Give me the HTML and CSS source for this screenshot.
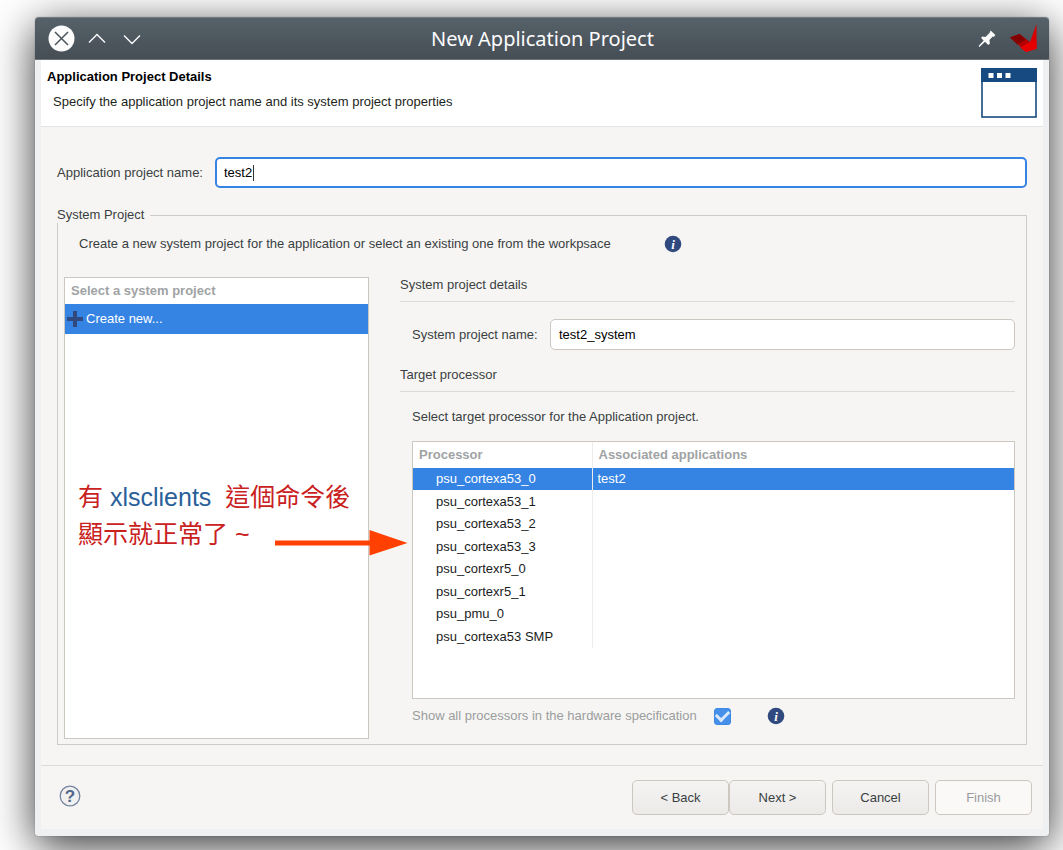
FILE: index.html
```html
<!DOCTYPE html>
<html lang="zh-Hant">
<head>
<meta charset="utf-8">
<title>New Application Project</title>
<link rel="stylesheet" href="styles.css">
</head>
<body>
<main class="window">
  <header class="titlebar">
    <div class="title-group">
      <button class="title-btn" aria-label="Close"><svg width="28" height="28" viewBox="0 0 28 28"><circle cx="13.500" cy="13.500" r="13" fill="#fcfcfc"/><path d="M7 7l13 13M20 7l-13 13" stroke="#4b545b" stroke-width="1.500" fill="none"/></svg></button>
      <button class="title-btn" aria-label="Maximize"><svg width="18" height="28" viewBox="0 0 18 28"><path d="M1 17.500l8-8 8 8" stroke="#fcfcfc" stroke-width="1.400" fill="none"/></svg></button>
      <button class="title-btn" aria-label="Minimize"><svg width="18" height="28" viewBox="0 0 18 28"><path d="M1 10.500l8 8 8-8" stroke="#fcfcfc" stroke-width="1.400" fill="none"/></svg></button>
    </div>
    <h1 class="title">New Application Project</h1>
    <div class="title-group title-end">
      <button class="title-btn" aria-label="Keep above"><svg width="18" height="18" viewBox="0 0 18 18"><path d="M12.600 .6l4.800 4.400-1.700 2-1-.4-3.300 3.300 .5 3.600-1.600 1.400-3.300-3.200-5.600 5.200-.8-.8 5-5.700-2.500-2.300 1.200-1.600 3.200.4 4-4z" fill="#fcfcfc"/></svg></button>
      <svg class="brand" width="28" height="29" viewBox="0 0 28 29"><path d="M1 13.500l9.500-3.500 10.500 8 -4 9.500z" fill="#b40000"/><path d="M1 13.500l9.500-3.500 6.500 5.500-8.500 5z" fill="#820000"/><path d="M27.500 0v25l-10.500 3-3-2.500 7-7.500z" fill="#d80000"/><path d="M21 18l6.500-1.500v8l-10.500 3.500-6-4.500z" fill="#e60000"/></svg>
    </div>
  </header>

  <section class="banner">
    <div>
      <h2 class="banner-title">Application Project Details</h2>
      <p class="banner-text">Specify the application project name and its system project properties</p>
    </div>
    <svg width="56" height="50" viewBox="0 0 56 50"><rect x="1" y="1" width="54" height="48" fill="#fff" stroke="#174a80" stroke-width="1.600"/><path d="M0 0h56v14H0z" fill="#174a80"/><path d="M7.500 5h5v5h-5zM16 5h5v5h-5zM24.500 5h5v5h-5z" fill="#fff"/></svg>
  </section>

  <form class="content">
    <div class="field">
      <label class="label" for="app-name">Application project name:</label>
      <span class="input-wrap"><input class="input focused" id="app-name" type="text" value="test2"><span class="caret"></span></span>
    </div>

    <fieldset class="group">
      <legend>System Project</legend>
      <div class="intro">
        <span class="intro-text">Create a new system project for the application or select an existing one from the workpsace</span>
        <svg width="18" height="18" viewBox="0 0 18 18"><circle cx="9" cy="9" r="8.300" fill="#304a80"/><text x="9" y="13.500" class="info-glyph">i</text></svg>
      </div>
      <div class="columns">
        <div class="panel systems">
          <table class="list">
            <thead><tr><th>Select a system project</th></tr></thead>
            <tbody><tr class="selected"><td><span class="create"><svg width="16" height="16" viewBox="0 0 16 16"><path d="M6 0h4v6h6v4h-6v6H6v-6H0V6h6z" fill="#304a80"/></svg>Create new...</span></td></tr></tbody>
          </table>
          <p class="note">有 <span class="command">xlsclients</span>&nbsp; 這個命令後<br>顯示就正常了 ~</p>
          <svg class="arrow" width="134" height="26" viewBox="0 0 134 26"><path d="M0 10.500h94.500V0l38 13-38 12.500v-10H0z" fill="#ff4000"/></svg>
        </div>
        <div class="details">
          <h3 class="heading">System project details</h3>
          <div class="field sub-field">
            <label class="sub-label" for="sys-name">System project name:</label>
            <span class="input-wrap"><input class="input" id="sys-name" type="text" value="test2_system"></span>
          </div>
          <h3 class="heading">Target processor</h3>
          <div class="target">
            <p class="hint">Select target processor for the Application project.</p>
            <div class="panel processors">
              <table class="list grid">
                <thead><tr><th class="col-name">Processor</th><th>Associated applications</th></tr></thead>
                <tbody>
                  <tr class="selected"><td>psu_cortexa53_0</td><td>test2</td></tr>
                  <tr><td>psu_cortexa53_1</td><td></td></tr>
                  <tr><td>psu_cortexa53_2</td><td></td></tr>
                  <tr><td>psu_cortexa53_3</td><td></td></tr>
                  <tr><td>psu_cortexr5_0</td><td></td></tr>
                  <tr><td>psu_cortexr5_1</td><td></td></tr>
                  <tr><td>psu_pmu_0</td><td></td></tr>
                  <tr><td>psu_cortexa53 SMP</td><td></td></tr>
                </tbody>
              </table>
            </div>
            <div class="show-all">
              <label class="show-label" for="show-all">Show all processors in the hardware specification</label>
              <input class="check" id="show-all" type="checkbox" checked disabled>
              <svg class="info-end" width="18" height="18" viewBox="0 0 18 18"><circle cx="9" cy="9" r="8.300" fill="#304a80"/><text x="9" y="13.500" class="info-glyph">i</text></svg>
            </div>
          </div>
        </div>
      </div>
    </fieldset>
  </form>

  <footer class="footer">
    <button class="help" aria-label="Help"><svg width="22" height="22" viewBox="0 0 22 22"><circle cx="11" cy="11" r="9.800" fill="#f0f0f0" stroke="#7484a0" stroke-width="1.300"/><text x="11" y="17" class="help-glyph">?</text></svg></button>
    <div class="actions">
      <div class="steps"><button class="btn">&lt; Back</button><button class="btn">Next &gt;</button></div>
      <button class="btn">Cancel</button>
      <button class="btn" disabled>Finish</button>
    </div>
  </footer>
</main>
</body>
</html>
```
FILE: styles.css
```css
* { box-sizing: border-box; }
body {
  margin: 0;
  min-height: 100vh;
  padding: 17px 14px 14px 35px;
  display: flex;
  overflow: hidden;
  background: #fff;
  color: #3a3f42;
  font: 13px/16px "Liberation Sans", Arial, sans-serif;
}
h1, h2, h3, p { margin: 0; }
button, input { font: inherit; color: inherit; }
svg { display: block; flex: none; }

.window {
  flex: 1;
  display: flex;
  flex-direction: column;
  padding: 0 6px 7px;
  background: #eff0f2;
  border-radius: 4px 4px 3px 3px;
  box-shadow: 0 0 1px rgba(0, 0, 0, .5), 0 10px 44px rgba(0, 0, 0, .8);
}
.titlebar {
  display: grid;
  grid-template-columns: 1fr auto 1fr;
  align-items: center;
  height: 43px;
  margin: 0 -6px;
  padding: 0 12px 0 13px;
  border-top: 1px solid #717b82;
  border-bottom: 1px solid #6c757b;
  border-radius: 4px 4px 0 0;
  background: linear-gradient(#566169, #464e55);
}
.title-group { display: flex; align-items: center; gap: 17px; }
.title-group .title-btn:first-child { margin-right: -5px; }
.title-end { justify-content: flex-end; gap: 18px; }
.title-btn, .help { padding: 0; border: 0; background: none; }
.title { color: #fcfcfc; font: 400 20px/28px "Noto Sans", sans-serif; }

.banner {
  display: flex;
  justify-content: space-between;
  align-items: flex-start;
  padding: 8px 6px;
  height: 67px;
  background: #fff;
  border-bottom: 1px solid #e4e4e3;
}
.banner-title { color: #000; font-size: 13px; line-height: 18px; }
.banner-text { padding: 8px 6px 0; color: #1c1f20; }

.content {
  flex: 1;
  display: flex;
  flex-direction: column;
  padding: 30px 16px 20px;
  background: #f6f5f3;
}
.field { display: flex; align-items: center; gap: 6px; }
.label { min-width: 152px; }
.sub-label { min-width: 132px; }
.input-wrap { position: relative; flex: 1; display: flex; }
.input {
  width: 100%;
  height: 31px;
  padding: 0 8px;
  border: 1px solid #cdc7c2;
  border-radius: 5px;
  background: #fff;
  color: #000;
  outline: 0;
}
.focused { border: 2px solid #3584e4; padding: 0 7px; }
.caret { position: absolute; left: 38px; top: 8px; width: 1px; height: 16px; background: #333; }

.group {
  flex: 1;
  display: flex;
  flex-direction: column;
  min-width: 0;
  margin: 19px 0 0;
  padding: 12px 11px 5px 6px;
  border: 1px solid #cfcac6;
}
.group legend { margin-left: -7px; padding: 0 6px 0 0; }
.intro { display: flex; align-items: center; gap: 30px; padding-left: 15px; }
.intro-text { min-width: 555px; }
.columns { display: grid; grid-template-columns: 305fr 615fr; gap: 31px; padding-top: 24px; flex: 1; }
.panel { border: 1px solid #cdc7c2; background: #fff; }
.systems { position: relative; }
.list { width: 100%; border-collapse: collapse; }
.list th { height: 26px; padding: 0 6px; color: #a0a3a4; text-align: left; }
.list td { height: 30px; padding: 0 4px 0 2px; }
.selected { background: #3584e4; color: #fff; }
.create { display: flex; align-items: center; gap: 3px; }

.note {
  position: absolute;
  left: 13px;
  top: 201px;
  color: #c9211e;
  font: 25px/37px "Liberation Sans", "Noto Sans CJK TC", sans-serif;
  white-space: nowrap;
}
.command { color: #2a6099; }
.arrow { position: absolute; left: 210px; top: 252px; }

.heading { padding-bottom: 8px; border-bottom: 1px solid #dcd9d6; font-size: 13px; font-weight: 400; }
.sub-field { padding: 17px 0 17px 12px; }
.target { padding: 17px 0 0 12px; }
.processors { height: 258px; margin-top: 16px; }
.grid { table-layout: fixed; color: #1a1c1d; }
.col-name { width: 179px; }
.grid td { height: 23px; padding-left: 5px; line-height: 16px; }
.grid tr:nth-child(odd) td { height: 22px; }
.grid .selected td { height: 23px; color: #fff; }
.grid td:first-child { padding-left: 23px; }
.grid th:first-child, .grid td:first-child { border-right: 1px solid #ececec; }
.show-all { display: flex; align-items: center; padding-top: 8px; gap: 6px; color: #9a9d9e; }
.show-label { min-width: 296px; }
.info-end { margin-left: 30px; }
.check {
  appearance: none;
  display: grid;
  place-items: center;
  width: 17px;
  height: 17px;
  margin: 0;
  border: 1px solid #3d8ae6;
  border-radius: 3px;
  background: #4690ea;
}
.check::after {
  content: "";
  width: 10px;
  height: 6px;
  margin-bottom: 3px;
  border: solid #d9e8fb;
  border-width: 0 0 3px 3px;
  transform: rotate(-45deg);
}
.info-glyph { fill: #fff; font: italic bold 13px "Liberation Serif", serif; text-anchor: middle; }
.help-glyph { fill: #52658a; font: bold 17px "Liberation Sans", sans-serif; text-anchor: middle; }

.footer {
  display: flex;
  justify-content: space-between;
  align-items: flex-start;
  padding: 14px 11px 14px 18px;
  border-top: 1px solid #dcdad7;
  background: #f6f5f3;
}
.help { margin-top: 5px; }
.actions { display: flex; gap: 6px; }
.steps { display: flex; }
.btn {
  width: 97px;
  height: 35px;
  padding: 0;
  border: 1px solid #cdc7c2;
  border-radius: 5px;
  background: linear-gradient(#f5f4f3, #ebeae8);
}
.btn:disabled { color: #999c9d; background: #faf9f8; }
```
